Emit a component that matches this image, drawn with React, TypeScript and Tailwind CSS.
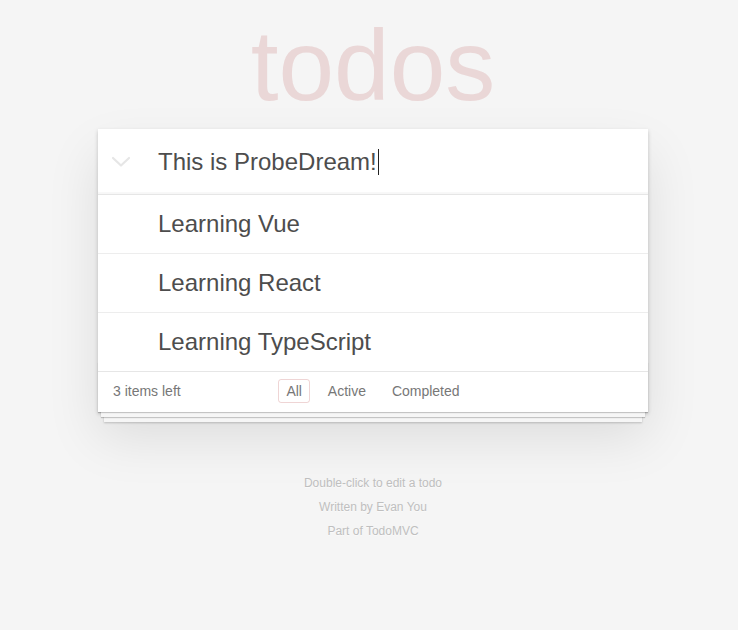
import React from "react";

const todos = ["Learning Vue", "Learning React", "Learning TypeScript"];

export default function App() {
  return (
    <div className="min-h-[630px] bg-[#f5f5f5] text-[14px] leading-[19.6px] text-[#4d4d4d] font-['Liberation_Sans','Helvetica_Neue',Helvetica,Arial,sans-serif] pt-[15px]">
      <h1 className="w-[550px] ml-[98px] text-center text-[100px] leading-[100px] font-thin text-[rgba(175,47,47,0.15)] mb-[14px]">
        todos
      </h1>
      <section className="w-[550px] ml-[98px] bg-white relative shadow-[0_2px_4px_0_rgba(0,0,0,0.2),0_25px_50px_0_rgba(0,0,0,0.1)]">
        <div className="flex items-center h-[65px] shadow-[inset_0_-2px_1px_rgba(0,0,0,0.03)]">
          <div className="w-[60px] pl-[13px] flex items-center">
            <svg width="20" height="12" viewBox="0 0 20 12" fill="none">
              <polyline points="2,2 10,9.5 18,2" stroke="#e6e6e6" strokeWidth="2.2" strokeLinecap="round" strokeLinejoin="round" />
            </svg>
          </div>
          <div className="pr-4 text-[24px] leading-[33.6px] text-[#4d4d4d] flex items-center">
            <span>This is ProbeDream!</span>
            <span className="inline-block w-px h-[26px] bg-[#222] ml-px" />
          </div>
        </div>
        <ul className="border-t border-[#e6e6e6]">
          {todos.map((t, i) => (
            <li
              key={t}
              className={`text-[24px] leading-[28px] py-[15px] pl-[60px] pr-[15px] text-[#4d4d4d] ${
                i < todos.length - 1 ? "border-b border-[#ededed]" : ""
              }`}
            >
              {t}
            </li>
          ))}
        </ul>
        <footer className="relative border-t border-[#e6e6e6] px-[15px] py-[10px] h-[41px] text-[#777] grid grid-cols-[1fr_auto_1fr] items-center before:content-[''] before:absolute before:left-0 before:right-0 before:bottom-0 before:h-[50px] before:overflow-hidden before:shadow-[0_1px_1px_rgba(0,0,0,0.2),0_8px_0_-3px_#f6f6f6,0_9px_1px_-3px_rgba(0,0,0,0.2),0_16px_0_-6px_#f6f6f6,0_17px_2px_-6px_rgba(0,0,0,0.2)] before:pointer-events-none">
          <span className="relative">3 items left</span>
          <div className="relative">
            <a className="mx-[3px] px-[7px] py-[3px] border border-[rgba(175,47,47,0.2)] rounded-[3px] text-[#777]">All</a>{" "}
            <a className="mx-[3px] px-[7px] py-[3px] border border-transparent rounded-[3px] text-[#777]">Active</a>{" "}
            <a className="mx-[3px] px-[7px] py-[3px] border border-transparent rounded-[3px] text-[#777]">Completed</a>
          </div>
          <span />
        </footer>
      </section>
      <footer className="w-[550px] ml-[98px] mt-[65px] flex flex-col gap-[12px] text-center text-[12px] leading-[12px] text-[#bfbfbf] [text-shadow:0_1px_0_rgba(255,255,255,0.5)]">
        <p>Double-click to edit a todo</p>
        <p>Written by Evan You</p>
        <p>Part of TodoMVC</p>
      </footer>
    </div>
  );
}
